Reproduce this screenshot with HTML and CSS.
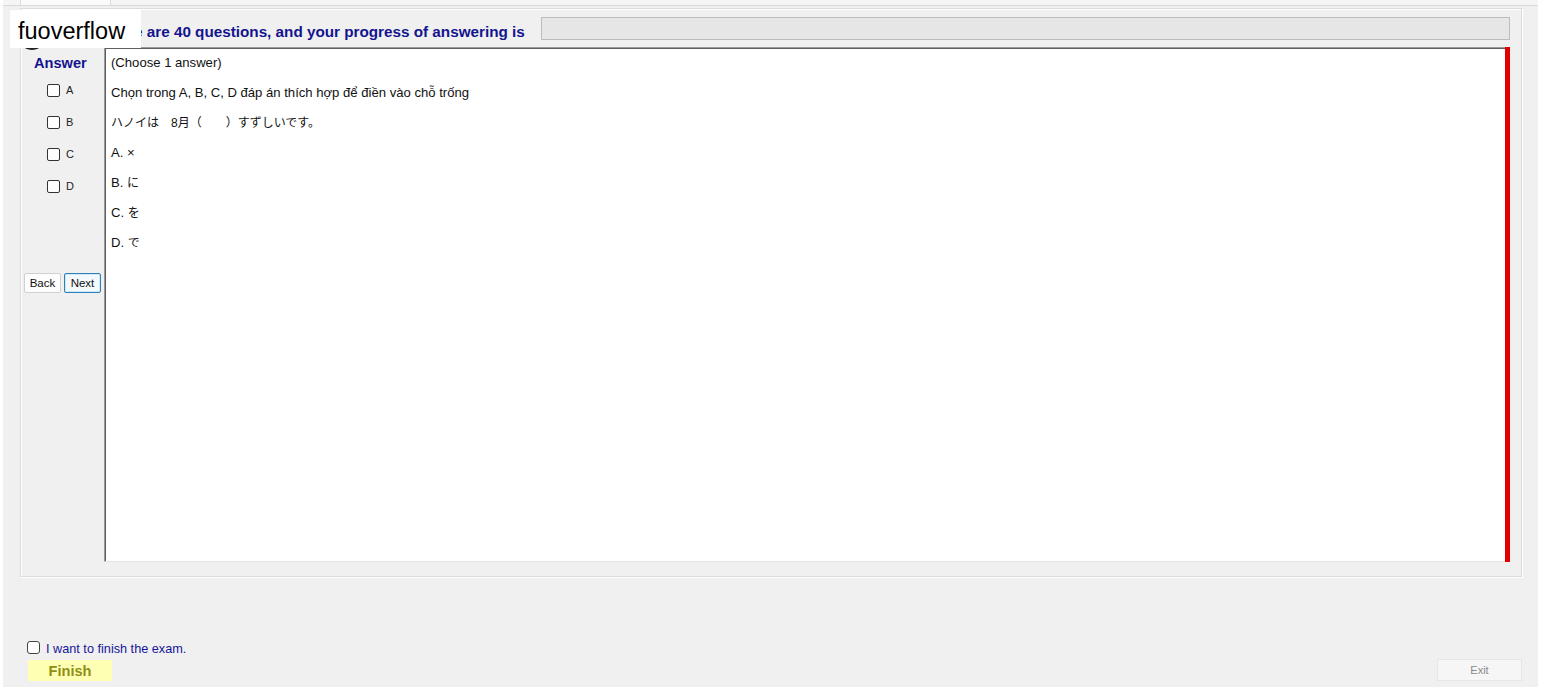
FILE: index.html
```html
<!DOCTYPE html>
<html>
<head>
<meta charset="utf-8">
<title>Exam</title>
<link rel="stylesheet" href="styles.css">
</head>
<body>
<div class="screen">
  <div class="tabstrip"><div class="tab"></div></div>
  <div class="window">
    <div class="group">
      <div class="header">
        <div class="title">There are 40 questions, and your progress of answering is</div>
        <div class="progress"></div>
      </div>
      <div class="body">
        <div class="answers">
          <div class="answer-title">Answer</div>
          <label class="opt"><span class="box"></span><span class="letter">A</span></label>
          <label class="opt"><span class="box"></span><span class="letter">B</span></label>
          <label class="opt"><span class="box"></span><span class="letter">C</span></label>
          <label class="opt"><span class="box"></span><span class="letter">D</span></label>
          <div class="nav">
            <button class="btn">Back</button>
            <button class="btn focused">Next</button>
          </div>
        </div>
        <div class="question">
          <p>(Choose 1 answer)</p>
          <p>Chọn trong A, B, C, D đáp án thích hợp để điền vào chỗ trống</p>
          <p class="jp">ハノイは　8月（　　）すずしいです。</p>
          <p>A. ×</p>
          <p>B. <span class="jp">に</span></p>
          <p>C. <span class="jp">を</span></p>
          <p>D. <span class="jp">で</span></p>
        </div>
        <div class="redbar"></div>
      </div>
    </div>
    <div class="footer">
      <div class="finish-area">
        <label class="confirm"><span class="box small"></span><span>I want to finish the exam.</span></label>
        <button class="finish">Finish</button>
      </div>
      <button class="exit">Exit</button>
    </div>
  </div>
  <div class="blob"></div>
  <div class="watermark">fuoverflow</div>
</div>
</body>
</html>
```

FILE: styles.css
```css
html, body {
  margin: 0;
  padding: 0;
  background: #ffffff;
  font-family: "Liberation Sans", Arial, sans-serif;
}

.screen {
  position: relative;
  width: 1535px;
  margin-left: 3px;
  display: flex;
  flex-direction: column;
}

.tabstrip {
  height: 5px;
  background: #f5f5f5;
  padding-left: 17px;
}

.tab {
  width: 89px;
  height: 5px;
  background: #fbfbfb;
  border-left: 1px solid #dcdcdc;
  border-right: 1px solid #dcdcdc;
}

.window {
  background: #f0f0f0;
  border-top: 1px solid #dadada;
  padding: 2px 16px 6px 17px;
}

.group {
  width: 1502px;
  height: 569px;
  box-sizing: border-box;
  border: 1px solid #dcdcdc;
  box-shadow: inset 1px 1px 0 #ffffff, 1px 1px 0 #ffffff;
  padding-right: 11px;
  display: flex;
  flex-direction: column;
}

.header {
  height: 38px;
  display: flex;
  align-items: center;
  padding-left: 80px;
}

.title {
  font-size: 15.25px;
  font-weight: bold;
  color: #14148f;
  white-space: nowrap;
  margin-top: 7px;
}

.progress {
  margin-left: auto;
  width: 969px;
  height: 23px;
  box-sizing: border-box;
  background: #e6e6e6;
  border: 1px solid #bcbcbc;
  margin-top: 1px;
}

.body {
  height: 515px;
  display: flex;
}

.answers {
  width: 83px;
  flex: 0 0 83px;
  display: flex;
  flex-direction: column;
}

.answer-title {
  padding-top: 6px;
  height: 21px;
  line-height: 21px;
  padding-left: 13px;
  font-size: 14.6px;
  font-weight: bold;
  color: #14148f;
}

.opt {
  height: 32px;
  display: flex;
  align-items: center;
  padding-left: 26px;
}

.box {
  display: inline-block;
  width: 13px;
  height: 13px;
  box-sizing: border-box;
  border: 1px solid #333333;
  border-radius: 2px;
  background: #ffffff;
}

.letter {
  margin-left: 6px;
  font-size: 11px;
  color: #222222;
}

.nav {
  margin-top: 71px;
  padding-left: 3px;
  display: flex;
  gap: 3px;
}

.btn {
  width: 37px;
  height: 20px;
  padding: 0;
  font-family: "Liberation Sans", Arial, sans-serif;
  font-size: 11.5px;
  color: #111111;
  background: #fdfdfd;
  border: 1px solid #d0d0d0;
  border-radius: 2px;
}

.btn.focused {
  border: 1px solid #2f7fb8;
  box-shadow: inset 0 0 0 1px #cfe8f7;
  background: #f3f9fd;
}

.question {
  flex: 1;
  background: #ffffff;
  border-top: 1px solid #9a9a9a;
  border-left: 1px solid #9a9a9a;
  box-shadow: inset 1px 1px 0 #5f5f5f;
  border-bottom: 1px solid #e3e3e3;
  padding-left: 6px;
  font-size: 13.1px;
  color: #111111;
}

.question p {
  margin: 0;
  line-height: 30px;
  height: 30px;
}

.jp {
  font-family: "Liberation Sans", "Noto Sans CJK JP", sans-serif;
  font-size: 12px;
}

.redbar {
  width: 5px;
  flex: 0 0 5px;
  background: #e00000;
}

.footer {
  display: flex;
  justify-content: space-between;
  align-items: flex-end;
  margin-top: 62px;
  width: 1502px;
}

.finish-area {
  display: flex;
  flex-direction: column;
}

.confirm {
  display: flex;
  align-items: center;
  height: 16px;
  margin-left: 7px;
  font-size: 12.7px;
  color: #16169a;
}

.confirm span:last-child {
  position: relative;
  top: 2px;
}

.box.small {
  width: 13px;
  height: 13px;
  margin-right: 6px;
  border-color: #444444;
  border-radius: 3px;
}

.finish {
  margin-top: 5px;
  margin-left: 8px;
  width: 84px;
  height: 21px;
  padding: 0;
  border: none;
  background: #ffffb4;
  font-family: "Liberation Sans", Arial, sans-serif;
  font-size: 14.6px;
  font-weight: bold;
  color: #8f8f14;
}

.exit {
  width: 85px;
  height: 22px;
  padding: 0;
  border: 1px solid #e6e6e6;
  background: #f6f6f6;
  font-family: "Liberation Sans", Arial, sans-serif;
  font-size: 11px;
  color: #8a8a8a;
}

.watermark {
  position: absolute;
  left: 7px;
  top: 10px;
  width: 131px;
  height: 38px;
  background: #ffffff;
  color: #000000;
  font-size: 23.5px;
  line-height: 38px;
  padding-left: 8px;
  padding-top: 2px;
  box-sizing: border-box;
}

.blob {
  position: absolute;
  left: 20px;
  top: 40px;
  width: 18px;
  height: 10px;
  border-radius: 50%;
  background: #222222;
}
```
